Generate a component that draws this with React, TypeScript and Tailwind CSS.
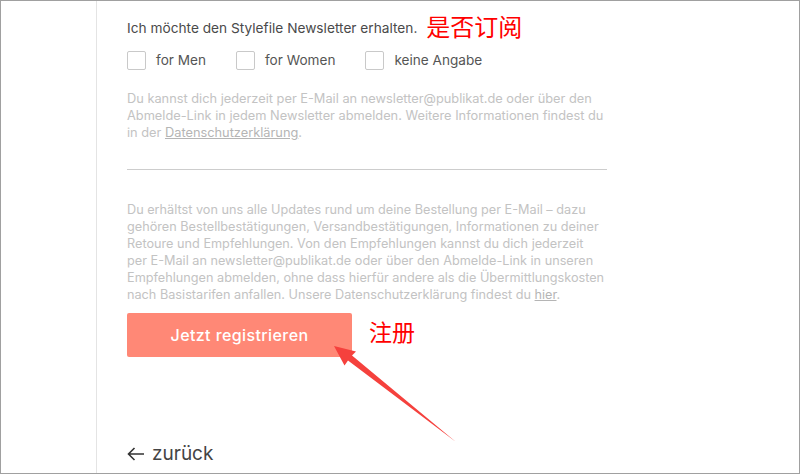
import React from 'react';

const options = ['for Men', 'for Women', 'keine Angabe'];

function Checkbox({ label }: { label: string }) {
  return (
    <label className="flex items-center gap-[10px] mr-[30px]">
      <span className="w-[19px] h-[19px] border border-[#c9c9c9] rounded-[2px] bg-white" />
      <span className="text-[13.6px] text-[#555]">{label}</span>
    </label>
  );
}

function Arrow() {
  // annotation arrow pointing at the register button
  return (
    <svg className="absolute left-0 top-0 pointer-events-none" width="800" height="474">
      <polygon
        points="455,441 351,354.5 355,350.5 333,345 343.5,364.5 347,359.5"
        fill="#f5413d"
      />
    </svg>
  );
}

function App() {
  return (
    <div
      className="relative w-[800px] h-[474px] border border-[#a0a0a0] bg-white flex overflow-hidden"
      style={{ fontFamily: 'Inter, "Noto Sans CJK SC", sans-serif' }}
    >
      <div className="w-[96px] shrink-0 border-r border-[#e4e4e4]" />
      <div className="pl-[30px] w-[540px] pt-[12px]">
        <div className="flex items-center h-[30px]">
          <span className="text-[13.7px] text-[#4a4a4a]">Ich möchte den Stylefile Newsletter erhalten.</span>
          <span className="ml-[9px] text-[24px] leading-[30px] text-[#ff0000]">是否订阅</span>
        </div>

        <div className="flex items-center h-[20px] mt-[7px]">
          {options.map(o => (
            <Checkbox key={o} label={o} />
          ))}
        </div>

        <p className="mt-[20px] whitespace-nowrap text-[12.8px] leading-[17px] text-[#c3c3c3]">
          Du kannst dich jederzeit per E-Mail an newsletter@publikat.de oder über den
          <br />
          Abmelde-Link in jedem Newsletter abmelden. Weitere Informationen findest du
          <br />
          in der <span className="underline text-[#b5b5b5]">Datenschutzerklärung</span>.
        </p>

        <div className="mt-[28px] w-[480px] h-px bg-[#cdcdcd]" />

        <p className="mt-[31px] whitespace-nowrap text-[12.7px] leading-[17px] text-[#c3c3c3]">
          Du erhältst von uns alle Updates rund um deine Bestellung per E-Mail – dazu
          <br />
          gehören Bestellbestätigungen, Versandbestätigungen, Informationen zu deiner
          <br />
          Retoure und Empfehlungen. Von den Empfehlungen kannst du dich jederzeit
          <br />
          per E-Mail an newsletter@publikat.de oder über den Abmelde-Link in unseren
          <br />
          Empfehlungen abmelden, ohne dass hierfür andere als die Übermittlungskosten
          <br />
          nach Basistarifen anfallen. Unsere Datenschutzerklärung findest du{' '}
          <span className="underline text-[#b5b5b5]">hier</span>.
        </p>

        <div className="flex items-center mt-[10px]">
          <button className="w-[225px] h-[44px] bg-[#ff8876] rounded-[2px] text-white text-[16px] tracking-[0.4px] font-medium">
            Jetzt registrieren
          </button>
          <span className="ml-[17px] text-[23px] text-[#ff0000] -mt-[3px]">注册</span>
        </div>

        <div className="mt-[85px] flex items-center h-[24px] text-[19px] text-[#444]">
          <svg width="18" height="14" viewBox="0 0 18 14" className="mr-[7px]">
            <path d="M17 7H1.5M7.5 1 1.5 7l6 6" fill="none" stroke="#333" strokeWidth="1.6" />
          </svg>
          zurück
        </div>
      </div>
      <Arrow />
    </div>
  );
}

export default App;
